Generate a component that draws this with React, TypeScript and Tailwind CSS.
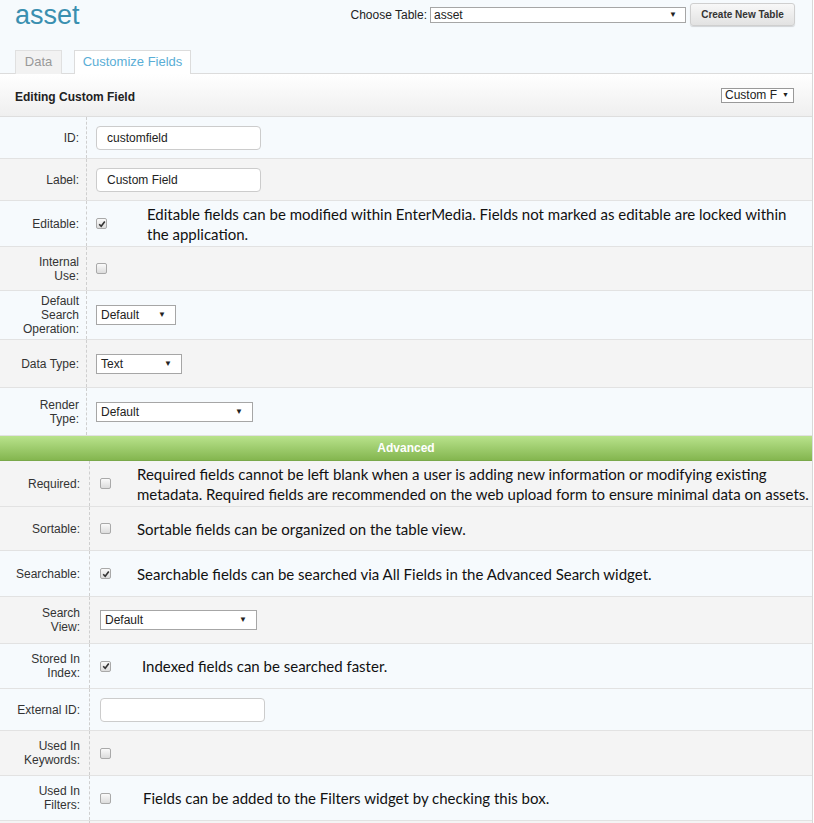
import React from "react";

const blue = "bg-[#f6fafd]";
const gray = "bg-[#f4f4f4]";

function Check({ checked }: { checked?: boolean }) {
  return (
    <span className="inline-flex h-[11px] w-[11px] shrink-0 items-center justify-center rounded-[2px] border border-[#a9a9a9] bg-gradient-to-b from-[#fafafa] to-[#dcdcdc]">
      {checked && (
        <svg width="8" height="8" viewBox="0 0 8 8">
          <path d="M1.2 4.2 L3.2 6.2 L6.8 1.5" stroke="#333" strokeWidth="1.6" fill="none" />
        </svg>
      )}
    </span>
  );
}

function Select({ value, w }: { value: string; w: string }) {
  return (
    <div className={`flex h-[20px] ${w} items-center justify-between border border-[#a6a6a6] bg-white pl-[4px] pr-[9px] text-[12px] text-[#222]`}>
      <span>{value}</span>
      <span className="text-[8px] text-[#222]">▼</span>
    </div>
  );
}

function Input({ value, w }: { value: string; w: string }) {
  return (
    <div className={`flex h-[24px] ${w} items-center rounded-[4px] border border-[#cccccc] bg-white pl-[10px] text-[12px] text-[#222]`}>
      {value}
    </div>
  );
}

type RowProps = {
  label: React.ReactNode;
  h: string;
  bg: string;
  adv?: boolean;
  children?: React.ReactNode;
};

function Row({ label, h, bg, adv, children }: RowProps) {
  return (
    <div className={`flex ${h} ${bg} border-b border-[#e2e2e2]`}>
      <div
        className={`flex shrink-0 items-center justify-end border-r border-dashed border-[#cfcfcf] text-right text-[12px] leading-[14px] text-[#333] ${
          adv ? "w-[90px] pl-[15px] pr-[9px]" : "w-[87px] pl-[17px] pr-[7px]"
        }`}
      >
        <span>{label}</span>
      </div>
      <div className={`flex flex-1 items-center ${adv ? "pl-[10px]" : "pl-[9px]"}`}>{children}</div>
    </div>
  );
}

const desc = "font-['Lato',sans-serif] text-[15px] leading-[20px] text-[#111]";

export default function App() {
  return (
    <div className="h-[823px] w-[814px] overflow-hidden bg-white font-['Liberation_Sans',Arial,sans-serif]">
      <div className="w-[813px] border-r border-[#d8d8d8] bg-[#f6fafd]">
        {/* header */}
        <div className="flex h-[50px] items-start">
          <div className="pl-[15px] pt-[0px] text-[27px] leading-[30px] text-[#3a8fb0]">asset</div>
          <div className="ml-auto flex items-center pr-[17px] pt-[3px]">
            <span className="mr-[3px] text-[12px] text-[#222]">Choose Table:</span>
            <div className="flex h-[16px] w-[256px] items-center justify-between border border-[#a6a6a6] bg-white pl-[3px] pr-[8px] text-[12px] text-[#222]">
              <span>asset</span>
              <span className="text-[8px]">▼</span>
            </div>
            <div className="ml-[4px] flex h-[23px] w-[105px] items-center justify-center rounded-[3px] border border-[#cfcfcf] bg-gradient-to-b from-[#f8f8f8] to-[#e2e2e2] text-[10px] font-bold text-[#333] shadow-[0_1px_1px_rgba(0,0,0,0.15)]">
              Create New Table
            </div>
          </div>
        </div>
        {/* tabs */}
        <div className="flex h-[24px] items-end border-b border-[#dcdcdc] pl-[15px]">
          <div className="mb-[-1px] flex h-[24px] w-[47px] items-center justify-center border border-b-0 border-[#e0e0e0] bg-[#f2f2f2] pb-[1px] text-[13px] text-[#999]">
            Data
          </div>
          <div className="mb-[-1px] ml-[12px] flex h-[24px] w-[117px] items-center justify-center border border-b-0 border-[#dcdcdc] bg-white pb-[1px] text-[13px] text-[#5aaed6]">
            Customize Fields
          </div>
        </div>
        {/* section header */}
        <div className="flex h-[43px] items-center border-b border-[#dedede] bg-gradient-to-b from-white to-[#efefef] pl-[15px] pr-[18px]">
          <span className="pt-[4px] text-[12px] font-bold text-[#222]">Editing Custom Field</span>
          <div className="ml-auto flex h-[15px] w-[73px] items-center justify-between border border-[#999] bg-white pl-[3px] pr-[4px] text-[12px] text-[#222]">
            <span>Custom F</span>
            <span className="text-[7px]">▼</span>
          </div>
        </div>

        <Row label="ID:" h="h-[42px]" bg={blue}>
          <Input value="customfield" w="w-[165px]" />
        </Row>
        <Row label="Label:" h="h-[42px]" bg={gray}>
          <Input value="Custom Field" w="w-[165px]" />
        </Row>
        <Row label="Editable:" h="h-[46px]" bg={blue}>
          <Check checked />
          <p className={`ml-[40px] w-[660px] ${desc}`}>
            Editable fields can be modified within EnterMedia. Fields not marked as editable are locked within the application.
          </p>
        </Row>
        <Row label="Internal Use:" h="h-[44px]" bg={gray}>
          <Check />
        </Row>
        <Row label="Default Search Operation:" h="h-[49px]" bg={blue}>
          <Select value="Default" w="w-[80px]" />
        </Row>
        <Row label="Data Type:" h="h-[48px]" bg={gray}>
          <Select value="Text" w="w-[86px]" />
        </Row>
        <Row label="Render Type:" h="h-[48px]" bg={blue}>
          <Select value="Default" w="w-[157px]" />
        </Row>
        <div className="flex h-[25px] items-center justify-center border-b border-[#7aa84a] bg-gradient-to-b from-[#b9e38c] to-[#84b64f] text-[12px] font-bold text-white">
          Advanced
        </div>
        <Row adv label="Required:" h="h-[46px]" bg={gray}>
          <Check />
          <p className={`ml-[26px] ${desc}`}>
            Required fields cannot be left blank when a user is adding new information or modifying existing metadata. Required fields are recommended on the web upload form to ensure minimal data on assets.
          </p>
        </Row>
        <Row adv label="Sortable:" h="h-[44px]" bg={gray}>
          <Check />
          <p className={`ml-[26px] ${desc}`}>Sortable fields can be organized on the table view.</p>
        </Row>
        <Row adv label="Searchable:" h="h-[46px]" bg={blue}>
          <Check checked />
          <p className={`ml-[26px] ${desc}`}>Searchable fields can be searched via All Fields in the Advanced Search widget.</p>
        </Row>
        <Row adv label="Search View:" h="h-[47px]" bg={gray}>
          <Select value="Default" w="w-[157px]" />
        </Row>
        <Row adv label="Stored In Index:" h="h-[45px]" bg={blue}>
          <Check checked />
          <p className={`ml-[31px] ${desc}`}>Indexed fields can be searched faster.</p>
        </Row>
        <Row adv label="External ID:" h="h-[42px]" bg={blue}>
          <Input value="" w="w-[165px]" />
        </Row>
        <Row adv label="Used In Keywords:" h="h-[45px]" bg={gray}>
          <Check />
        </Row>
        <Row adv label="Used In Filters:" h="h-[45px]" bg={blue}>
          <Check />
          <p className={`ml-[32px] ${desc}`}>Fields can be added to the Filters widget by checking this box.</p>
        </Row>
        <Row adv label="" h="h-[45px]" bg={gray} />
      </div>
    </div>
  );
}
